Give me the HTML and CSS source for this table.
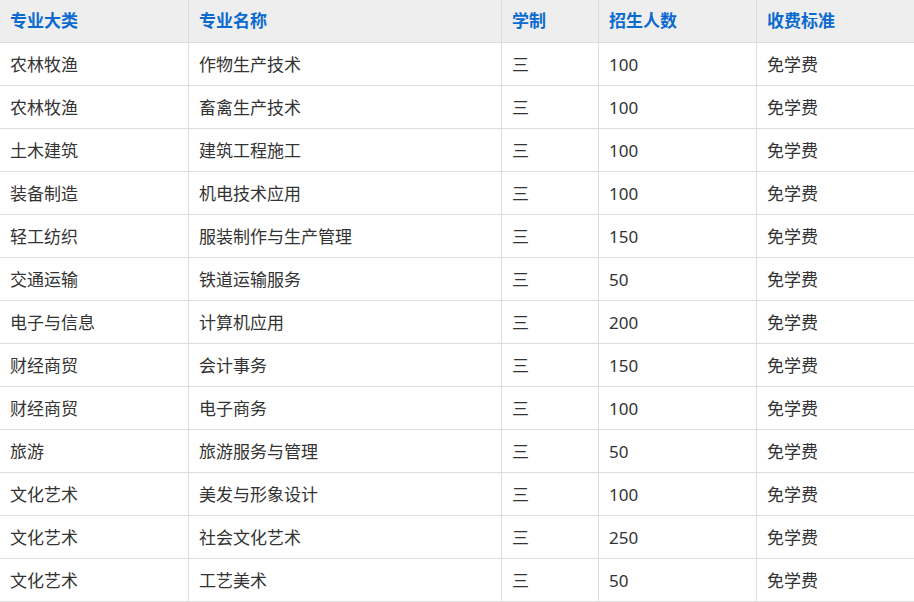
FILE: index.html
```html
<!DOCTYPE html>
<html lang="zh">
<head>
<meta charset="utf-8">
<title>招生专业</title>
<link rel="stylesheet" href="styles.css">
</head>
<body>
<div class="wrap">
<table class="majors">
<colgroup>
<col class="c1"><col class="c2"><col class="c3"><col class="c4"><col class="c5">
</colgroup>
<thead>
<tr><th>专业大类</th><th>专业名称</th><th>学制</th><th>招生人数</th><th>收费标准</th></tr>
</thead>
<tbody>
<tr><td>农林牧渔</td><td>作物生产技术</td><td>三</td><td>100</td><td>免学费</td></tr>
<tr><td>农林牧渔</td><td>畜禽生产技术</td><td>三</td><td>100</td><td>免学费</td></tr>
<tr><td>土木建筑</td><td>建筑工程施工</td><td>三</td><td>100</td><td>免学费</td></tr>
<tr><td>装备制造</td><td>机电技术应用</td><td>三</td><td>100</td><td>免学费</td></tr>
<tr><td>轻工纺织</td><td>服装制作与生产管理</td><td>三</td><td>150</td><td>免学费</td></tr>
<tr><td>交通运输</td><td>铁道运输服务</td><td>三</td><td>50</td><td>免学费</td></tr>
<tr><td>电子与信息</td><td>计算机应用</td><td>三</td><td>200</td><td>免学费</td></tr>
<tr><td>财经商贸</td><td>会计事务</td><td>三</td><td>150</td><td>免学费</td></tr>
<tr><td>财经商贸</td><td>电子商务</td><td>三</td><td>100</td><td>免学费</td></tr>
<tr><td>旅游</td><td>旅游服务与管理</td><td>三</td><td>50</td><td>免学费</td></tr>
<tr><td>文化艺术</td><td>美发与形象设计</td><td>三</td><td>100</td><td>免学费</td></tr>
<tr><td>文化艺术</td><td>社会文化艺术</td><td>三</td><td>250</td><td>免学费</td></tr>
<tr><td>文化艺术</td><td>工艺美术</td><td>三</td><td>50</td><td>免学费</td></tr>
</tbody>
</table>
</div>
</body>
</html>
```

FILE: styles.css
```css
html, body {
  margin: 0;
  padding: 0;
  background: #ffffff;
}
.wrap {
  overflow: hidden;
  width: 914px;
  height: 602px;
}
.majors {
  border-collapse: collapse;
  table-layout: fixed;
  width: 917px;
  margin: -1px 0 0 -1px;
  font-family: "Noto Sans", "Noto Sans CJK SC", sans-serif;
  font-size: 17px;
  color: #333333;
}
.c1 { width: 189px; }
.c2 { width: 313px; }
.c3 { width: 97px; }
.c4 { width: 158px; }
.c5 { width: 160px; }
.majors th,
.majors td {
  border: 1px solid #dddddd;
  height: 43px;
  padding: 1px 0 0 10px;
  text-align: left;
  vertical-align: middle;
  box-sizing: border-box;
  line-height: 20px;
  white-space: nowrap;
}
.majors th {
  background: #eeeeee;
  color: #0a6ad0;
  font-weight: bold;
  padding-top: 0;
}
```
